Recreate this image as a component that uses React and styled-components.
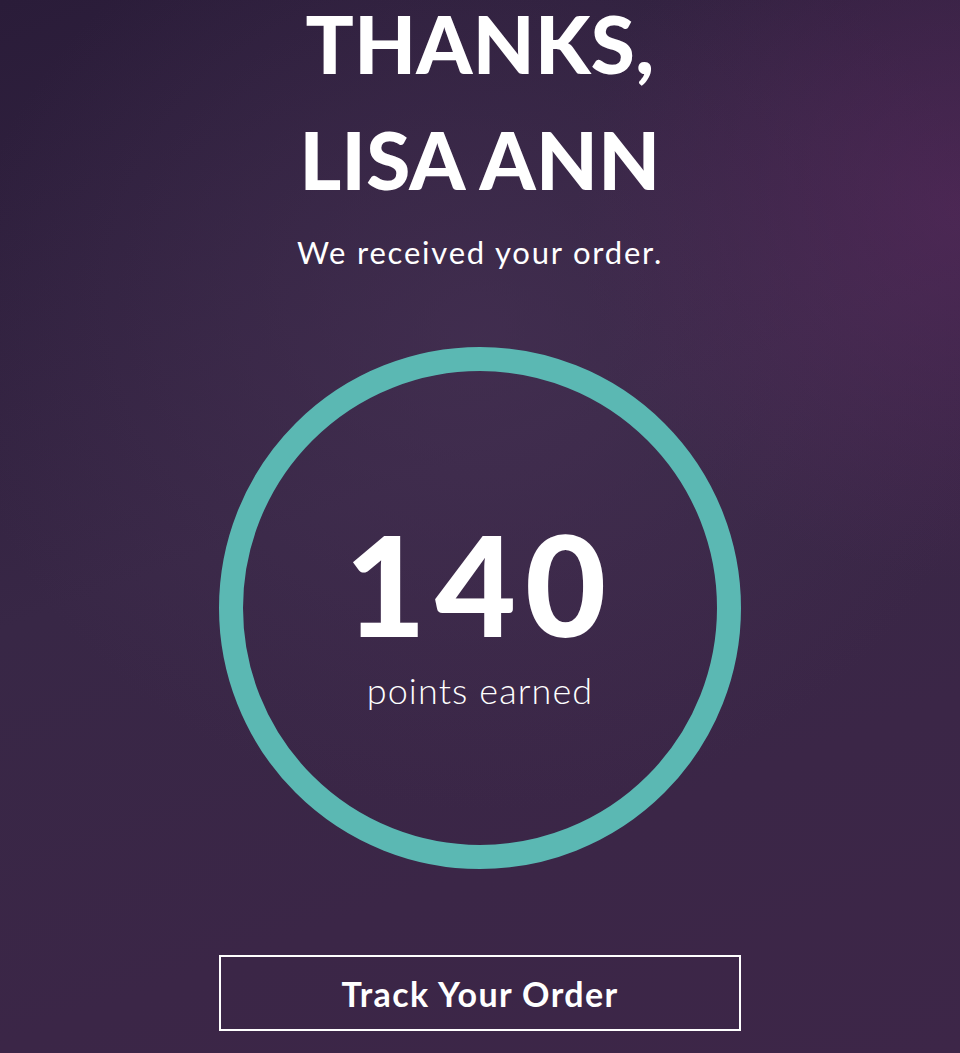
import styled, { createGlobalStyle } from "styled-components";

const GlobalStyle = createGlobalStyle`
  html, body {
    margin: 0;
    padding: 0;
    height: 100%;
  }
  body {
    font-family: Lato, "Open Sans", sans-serif;
    color: #ffffff;
    background: #382645;
    overflow: hidden;
  }
`;

function App() {
  return (
    <>
      <GlobalStyle />
      <Page>
        <Heading>
          <HeadingLine>THANKS,</HeadingLine>
          <HeadingLine>LISA ANN</HeadingLine>
        </Heading>
        <Subtitle>We received your order.</Subtitle>
        <PointsRing>
          <Points>140</Points>
          <PointsLabel>points earned</PointsLabel>
        </PointsRing>
        <TrackButton>Track Your Order</TrackButton>
      </Page>
    </>
  );
}

export default App;

// Styled Components
const Page = styled.main`
  width: 960px;
  height: 1053px;
  overflow: hidden;
  display: flex;
  flex-direction: column;
  align-items: center;
  background:
    radial-gradient(ellipse 40% 35% at 100% 20%, rgba(92, 40, 96, 0.55), transparent 100%),
    radial-gradient(ellipse 55% 45% at 50% 32%, rgba(74, 52, 88, 0.55), transparent 100%),
    linear-gradient(160deg, #2a1c39 0%, #382746 45%, #3b2647 75%, #3d2648 100%);
`;

const Heading = styled.h1`
  margin: 0;
  display: flex;
  flex-direction: column;
  align-items: center;
  gap: 29px;
  font-size: 80px;
  font-weight: 900;
  letter-spacing: 0.3px;
`;

const HeadingLine = styled.span`
  display: block;
  line-height: 87px;
  white-space: nowrap;
`;

const Subtitle = styled.p`
  margin: 31px 0 0;
  font-size: 31px;
  line-height: 1.2;
  font-weight: 400;
  letter-spacing: 1.8px;
`;

const PointsRing = styled.section`
  box-sizing: border-box;
  margin-top: 76px;
  width: 522px;
  height: 522px;
  border: 24px solid #5bb8b3;
  border-radius: 50%;
  display: flex;
  flex-direction: column;
  align-items: center;
  justify-content: center;
  padding-top: 8px;
`;

const Points = styled.div`
  font-size: 140px;
  line-height: 1;
  font-weight: 900;
  letter-spacing: 9px;
`;

const PointsLabel = styled.div`
  margin-top: 16px;
  font-size: 36px;
  line-height: 1.2;
  font-weight: 300;
  letter-spacing: 1.1px;
`;

const TrackButton = styled.button`
  box-sizing: border-box;
  margin-top: 86px;
  width: 522px;
  height: 76px;
  background: transparent;
  border: 2px solid #ffffff;
  color: #ffffff;
  font-family: inherit;
  font-size: 34px;
  font-weight: 700;
  letter-spacing: 1.4px;
  cursor: pointer;
`;
